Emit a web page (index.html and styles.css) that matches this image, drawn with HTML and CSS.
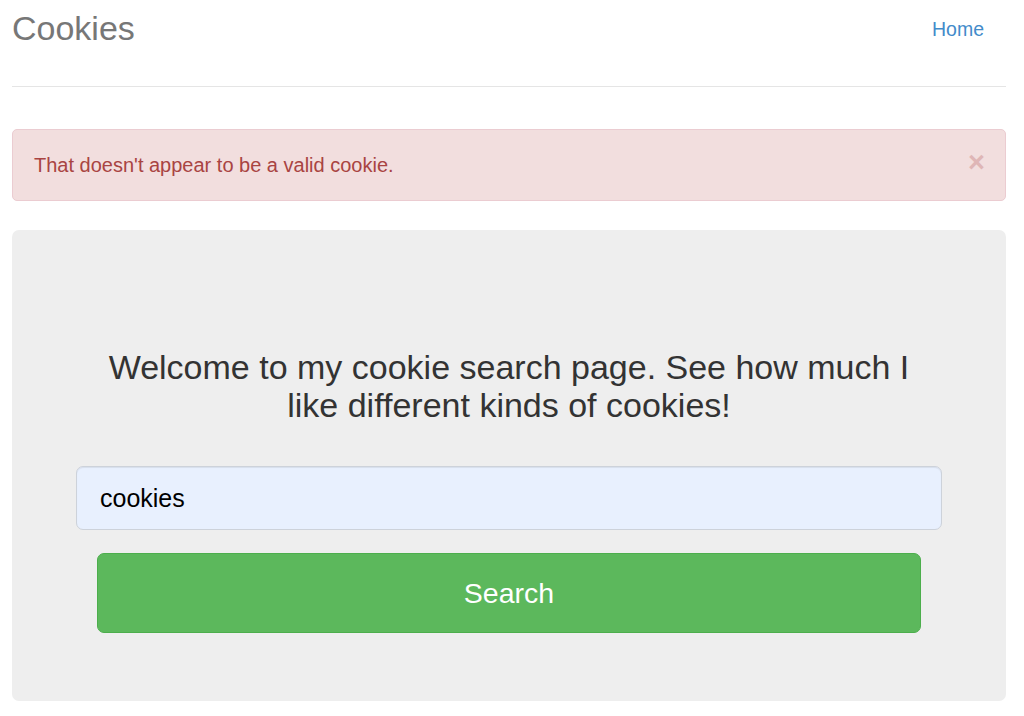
FILE: index.html
```html
<!DOCTYPE html>
<html lang="en">
<head>
<meta charset="utf-8">
<title>Cookies</title>
<link rel="stylesheet" href="styles.css">
</head>
<body>
<div class="page">
  <header class="header">
    <h3 class="brand">Cookies</h3>
    <nav class="nav"><a href="#" class="nav-link">Home</a></nav>
  </header>

  <div class="alert">
    <span class="alert-text">That doesn't appear to be a valid cookie.</span>
    <button class="close" type="button" aria-label="Close">&times;</button>
  </div>

  <section class="jumbotron">
    <h2 class="lead">Welcome to my cookie search page. See how much I like different kinds of cookies!</h2>
    <form class="search-form">
      <input class="search-input" type="text" value="cookies">
      <button class="search-btn" type="button">Search</button>
    </form>
  </section>
</div>
</body>
</html>
```

FILE: styles.css
```css
* { box-sizing: border-box; }

html, body {
  margin: 0;
  padding: 0;
  background: #fff;
  font-family: "Liberation Sans", Arial, sans-serif;
  color: #333;
}

.page {
  padding: 0 18px 0 12px;
}

.header {
  display: flex;
  justify-content: space-between;
  align-items: flex-start;
  height: 87px;
  border-bottom: 1px solid #e5e5e5;
}

.brand {
  margin: 0;
  font-size: 34px;
  font-weight: normal;
  line-height: 57px;
  color: #777;
}

.nav {
  padding-right: 22px;
}

.nav-link {
  display: block;
  font-size: 19.5px;
  line-height: 59px;
  color: #428bca;
  text-decoration: none;
}

.alert {
  display: flex;
  justify-content: space-between;
  align-items: flex-start;
  margin-top: 42px;
  height: 72px;
  padding: 0 20px 0 21px;
  background: #f2dede;
  border: 1px solid #ebccd1;
  border-radius: 5px;
  color: #a94442;
}

.alert-text {
  font-size: 20px;
  line-height: 70px;
}

.close {
  margin: 18px 0 0 0;
  padding: 0;
  border: 0;
  background: none;
  font-family: "Liberation Sans", Arial, sans-serif;
  font-size: 29px;
  font-weight: bold;
  line-height: 1;
  color: #a94442;
  opacity: 0.25;
  cursor: pointer;
}

.jumbotron {
  margin-top: 29px;
  height: 471px;
  padding: 118px 64px 0 64px;
  background: #eee;
  border-radius: 7px;
  text-align: center;
}

.lead {
  margin: 0 21px;
  font-size: 34px;
  font-weight: normal;
  line-height: 38px;
  color: #333;
}

.search-form {
  display: flex;
  flex-direction: column;
  align-items: stretch;
  margin-top: 42px;
}

.search-input {
  display: block;
  width: 100%;
  height: 64px;
  padding: 0 23px;
  font-family: "Liberation Sans", Arial, sans-serif;
  font-size: 25px;
  color: #000;
  background: #e8f0fe;
  border: 1px solid #cdd2da;
  border-radius: 7px;
  box-shadow: inset 0 1px 1px rgba(0,0,0,0.075);
  outline: none;
}

.search-btn {
  display: block;
  margin: 23px 21px 0 21px;
  height: 80px;
  font-family: "Liberation Sans", Arial, sans-serif;
  font-size: 28.5px;
  color: #fff;
  background: #5cb85c;
  border: 1px solid #4cae4c;
  border-radius: 7px;
  cursor: pointer;
}
```
